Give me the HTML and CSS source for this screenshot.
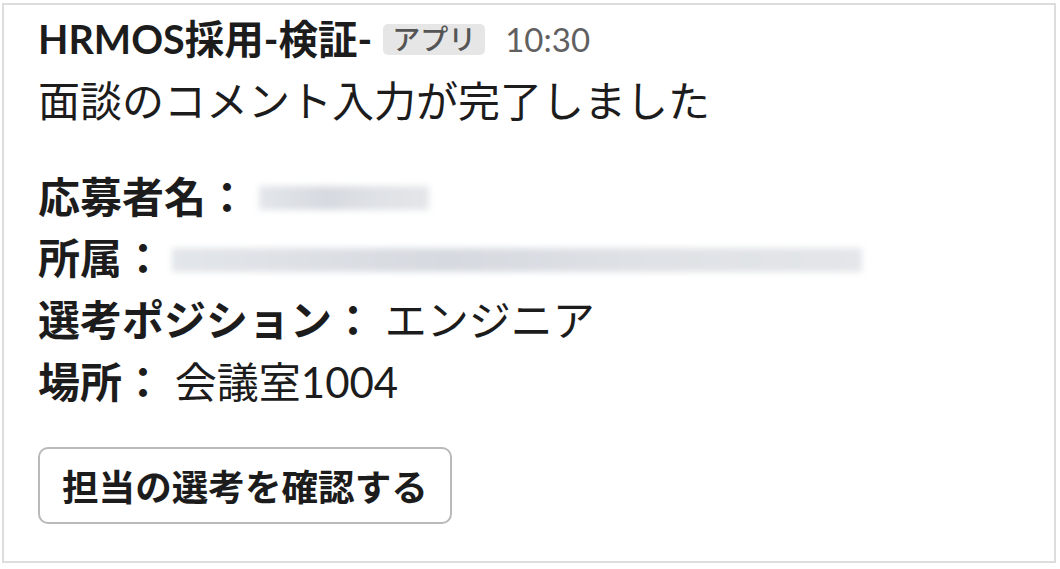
FILE: index.html
```html
<!DOCTYPE html>
<html lang="ja">
<head>
<meta charset="utf-8">
<title>HRMOS</title>
<link rel="stylesheet" href="styles.css">
</head>
<body>
<div class="frame">
  <div class="message">
    <div class="header">
      <span class="name">HRMOS採用-検証-</span>
      <span class="badge">アプリ</span>
      <span class="time">10:30</span>
    </div>
    <div class="line">面談のコメント入力が完了しました</div>
    <div class="fields">
      <div class="line"><span class="label">応募者名：</span> <span class="blur blur-name"></span></div>
      <div class="line"><span class="label">所属：</span><span class="blur blur-org"></span></div>
      <div class="line"><span class="label">選考ポジション：</span> エンジニア</div>
      <div class="line"><span class="label">場所：</span> 会議室1004</div>
    </div>
    <div class="actions">
      <button class="btn">担当の選考を確認する</button>
    </div>
  </div>
</div>
</body>
</html>
```

FILE: styles.css
```css
html, body {
  margin: 0;
  padding: 0;
  background: #ffffff;
}
body {
  font-family: Lato, "Noto Sans CJK JP", sans-serif;
  color: #1d1c1d;
}
.frame {
  box-sizing: border-box;
  width: 1054px;
  height: 560px;
  margin: 3px 0 0 2px;
  border: 2px solid #dddddd;
}
.message {
  padding: 2px 0 0 34px;
}
.header {
  display: flex;
  align-items: center;
  height: 64px;
}
.name {
  font-size: 39.5px;
  font-weight: 700;
  line-height: 62px;
}
.badge {
  margin-left: 11px;
  height: 31px;
  padding: 0 9px;
  border-radius: 5px;
  background: #e6e6e6;
  color: #555555;
  font-size: 28px;
  line-height: 31px;
  font-weight: 500;
}
.time {
  margin-left: 20px;
  font-size: 33px;
  color: #616061;
  line-height: 62px;
}
.line {
  font-size: 42px;
  line-height: 61.7px;
  height: 61.7px;
  white-space: nowrap;
}
.fields {
  margin-top: 34px;
}
.label {
  font-weight: 700;
}
.blur {
  display: inline-block;
  height: 24px;
  vertical-align: middle;
  background: linear-gradient(90deg, #e3e6ea 0%, #d6dae0 40%, #dfe2e6 70%, #e4e6e9 100%);
  filter: blur(3px);
  position: relative;
  top: -4px;
}
.blur-name {
  width: 170px;
}
.blur-org {
  width: 690px;
  margin-left: 8px;
}
.actions {
  margin-top: 34px;
}
.btn {
  box-sizing: border-box;
  height: 77px;
  padding: 0 22px;
  border: 2px solid #b9b9b9;
  border-radius: 10px;
  background: #ffffff;
  font-family: Lato, "Noto Sans CJK JP", sans-serif;
  font-size: 36.6px;
  font-weight: 700;
  color: #1d1c1d;
}
```
